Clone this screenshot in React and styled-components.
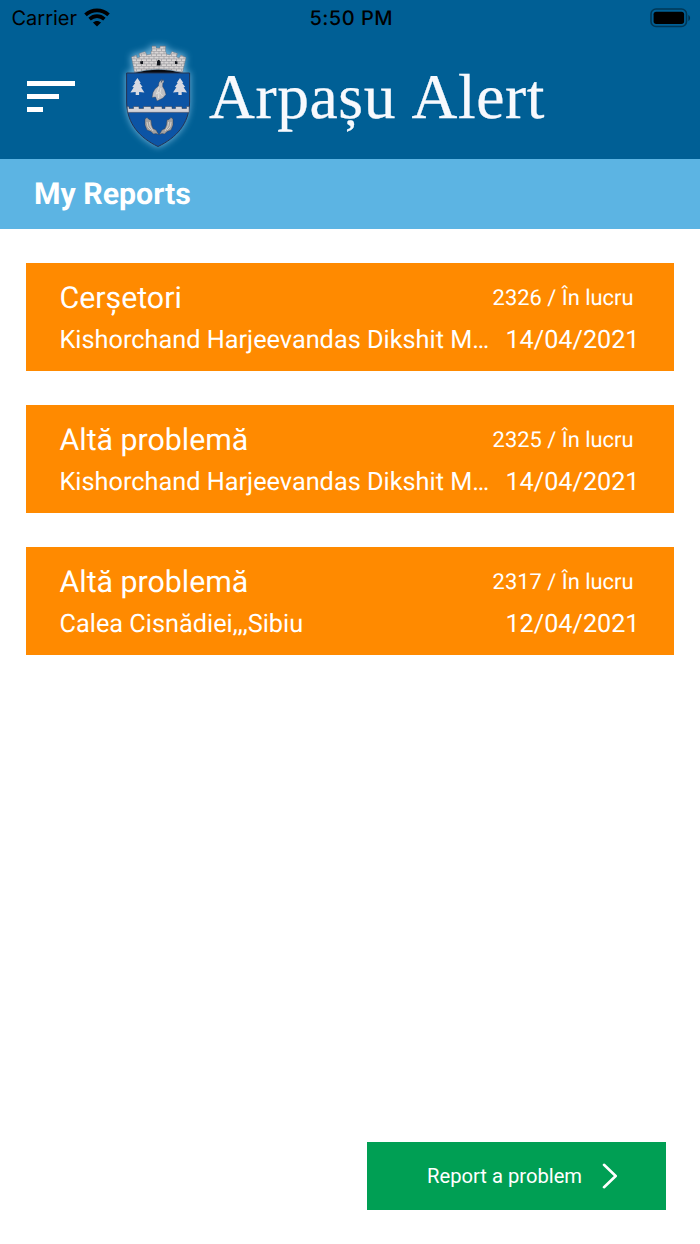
import styled, { createGlobalStyle } from "styled-components";

const GlobalStyle = createGlobalStyle`
  * {
    box-sizing: border-box;
  }
  body {
    margin: 0;
    background-color: #ffffff;
    font-family: Roboto, sans-serif;
    text-rendering: geometricPrecision;
  }
`;
const Screen = styled.div`
  width: 700px;
  height: 1244px;
  display: flex;
  flex-direction: column;
  overflow: hidden;
`;
const Header = styled.header`
  height: 159px;
  background-color: #005f95;
`;
const StatusBar = styled.div`
  height: 36px;
  padding: 0 9px 0 11.5px;
  display: grid;
  grid-template-columns: 1fr auto 1fr;
  align-items: center;
  color: #000000;
  font-family: Inter, sans-serif;
`;
const Carrier = styled.div`
  display: flex;
  align-items: center;
  gap: 7px;
  font-size: 20px;
`;
const Clock = styled.div`
  font-size: 20px;
  font-weight: 500;
  letter-spacing: 0.5px;
`;
const Battery = styled.svg`
  justify-self: end;
`;
const Brand = styled.div`
  height: 123px;
  padding-left: 27px;
  display: flex;
`;
const Menu = styled.div`
  width: 48px;
  margin: 44.5px 38px 0 0;
  display: flex;
  flex-direction: column;
  gap: 8px;
`;
const MenuLine = styled.div`
  width: ${(props) => props.$width}px;
  height: 5px;
  background-color: #ffffff;
`;
const Logo = styled.svg`
  flex: none;
  overflow: visible;
`;
const AppName = styled.div`
  margin: 25px 0 0 -4px;
  color: #f7f9fd;
  font-family: "Liberation Serif", serif;
  font-size: 63.5px;
  line-height: 72px;
  letter-spacing: 0.6px;
  word-spacing: 2.5px;
  white-space: nowrap;
  -webkit-text-stroke: 0.3px #f7f9fd;
`;
const PageTitle = styled.h1`
  height: 70px;
  margin: 0;
  padding: 1px 0 0 34px;
  background-color: #5cb4e3;
  color: #ffffff;
  font-size: 30.3px;
  font-weight: 700;
  line-height: 70px;
`;
const List = styled.div`
  flex: 1;
  padding: 33.5px 26px 0 25.5px;
  display: flex;
  flex-direction: column;
  gap: 34px;
`;
const Card = styled.div`
  height: 108px;
  padding: 15px 34.5px 0 34px;
  background-color: #ff8a00;
  color: #ffffff;
`;
const Row = styled.div`
  height: 42px;
  display: flex;
  justify-content: space-between;
  align-items: center;
  white-space: nowrap;
`;
const Title = styled.div`
  font-size: 30.3px;
`;
const Status = styled.div`
  margin-right: 6px;
  font-size: 21.9px;
`;
const Address = styled.div`
  font-size: 25.3px;
`;
const ReportDate = styled.div`
  font-size: 25.2px;
`;
const Footer = styled.footer`
  padding: 0 34px 34px 0;
  display: flex;
  justify-content: flex-end;
`;
const ReportButton = styled.button`
  width: 299px;
  height: 68px;
  padding: 0 48px 0 60px;
  display: flex;
  align-items: center;
  justify-content: space-between;
  border: 0;
  background-color: #009f54;
  color: #ffffff;
  font-family: Roboto, sans-serif;
  font-size: 20.2px;
  white-space: nowrap;
`;

const reports = [
  {
    id: 2326,
    title: "Cerșetori",
    address: "Kishorchand Harjeevandas Dikshit M…",
    date: "14/04/2021",
  },
  {
    id: 2325,
    title: "Altă problemă",
    address: "Kishorchand Harjeevandas Dikshit M…",
    date: "14/04/2021",
  },
  {
    id: 2317,
    title: "Altă problemă",
    address: "Calea Cisnădiei,,,Sibiu",
    date: "12/04/2021",
  },
];

const WifiIcon = () => (
  <svg width="26" height="20" viewBox="0 0 26 20" fill="none" stroke="#000">
    <path d="M1.5 6.9C8.2 .8 17.8 .8 24.5 6.9" strokeWidth="3.8" />
    <path d="M5.6 11.1C10 7.1 16 7.1 20.4 11.1" strokeWidth="3.6" />
    <path d="M8.9 14.6C11.4 12.4 14.6 12.4 17.1 14.6L13 18.6Z" fill="#000" stroke="none" />
  </svg>
);

const BatteryIcon = () => (
  <Battery width="42" height="20" viewBox="0 0 42 20">
    <rect x="2" y="1" width="35.5" height="17.5" rx="5" fill="none" stroke="#000" strokeOpacity=".42" strokeWidth="1.6" />
    <rect x="4.6" y="3.7" width="30.5" height="12.2" rx="2.6" />
    <path d="M39.4 7V13C41.6 12 41.6 8 39.4 7Z" opacity=".5" />
  </Battery>
);

const Tree = ({ x }) => (
  <path
    transform={`translate(${x} 42)`}
    d="M0 0L3.3 4.7L2.2 5L5.2 9L3.6 9.3L7 14.4L1.7 14V17H-1.7V14L-7 14.4L-3.6 9.3L-5.2 9L-2.2 5L-3.3 4.7Z"
    fill="#d7d9e2"
  />
);

const Fish = () => (
  <>
    <path
      d="M32 83L34 81.5L36 83.5L38 84L38.6 89L40 92.5L43 94L45.6 98.6L43 97.5L40.5 98L38 95.5L34 94L32 89Z"
      fill="#a3a1a0"
      stroke="#343b49"
      strokeWidth=".4"
    />
    <path d="M34 86L35 91L38 94M36.4 86L37 90L40 95" stroke="#dedbd6" strokeWidth=".8" fill="none" />
  </>
);

const Crest = () => (
  <Logo width="100" height="119" viewBox="0 0 100 119">
    <defs>
      <filter id="glow" x="-30%" y="-30%" width="160%" height="160%">
        <feGaussianBlur stdDeviation="3.6" />
      </filter>
      <pattern id="stones" width="5" height="5" patternUnits="userSpaceOnUse">
        <rect width="5" height="5" fill="#d9d6d6" />
        <path d="M0 .4H5M0 2.9H5M1 .4V2.9M3.5 2.9V5" stroke="#85858a" strokeWidth=".5" />
      </pattern>
    </defs>
    <path
      d="M19 20L38 15V11H53V15L72 20L70 37H76V66C75 88 63 102 45 110C27 102 15 88 14 66V37H21Z"
      fill="#a9dcfa"
      stroke="#a9dcfa"
      strokeWidth="2"
      opacity=".7"
      filter="url(#glow)"
    />
    <path d="M21 37Q45 30 70 37V39H21Z" fill="#080a10" />
    <path
      d="M18.5 21L23.5 19L24 22L27 21L26 17.5L32 15.5L34 19L38 18V15H39V10H43V12H47V10H52.5V15L53.5 18L57 19L59 15.5L64.5 17.5L63.5 21L66 22L68 19L73 21.5L69.5 36.5Q45 30 21.5 36.5Z"
      fill="url(#stones)"
      stroke="#686b73"
      strokeWidth=".4"
    />
    <path d="M44 29.5V25.5Q45.5 22 47.5 25.5V29.5ZM27 25.5L30 25V28H27.5ZM62 25L64.5 25.5V28H62Z" fill="#11141b" />
    <path
      d="M13.6 37H76.6V66C76.3 88 63 102 45 110.5C27 102 13.9 88 13.6 66Z"
      fill="#0c54a5"
      stroke="#253250"
      strokeWidth="1"
    />
    <Tree x={24.4} />
    <Tree x={67} />
    <path
      d="M48.8 43L46 46.5L45.4 50L42 53L40 56.5L39 61.5L42.5 61L44 65L50 62L53 58.5L51.6 54L49.6 50.5L49.8 47Q52 46 50 43.5L48.3 46.5L48.8 43Z"
      fill="#bfbfc2"
      stroke="#303a50"
      strokeWidth=".4"
    />
    <path d="M46 51L43.5 58L46 56L45.5 62M48 52L47 57L49.5 60" stroke="#e3e2df" strokeWidth=".9" fill="none" />
    <path
      d="M14.2 70.5H16V72.5H20.5V70.5H26V72.5H30.5V70.5H38V72.5H41V70.5H49V72.5H52V70.5H59V72.5H62.5V70.5H69V72.5H73.5V70.5H76.2V76.4H14.8Z"
      fill="#d3d3d9"
      stroke="#34435f"
      strokeWidth=".6"
    />
    <Fish />
    <g transform="translate(92 0) scale(-1 1)">
      <Fish />
    </g>
  </Logo>
);

const ArrowIcon = () => (
  <svg width="16" height="26" viewBox="0 0 16 26" fill="none" stroke="#fff">
    <path d="M2 1.8L13.7 13L2 24.2" strokeWidth="2.6" strokeLinecap="round" strokeLinejoin="round" />
  </svg>
);

export default function App() {
  return (
    <Screen>
      <GlobalStyle />
      <Header>
        <StatusBar>
          <Carrier>
            Carrier
            <WifiIcon />
          </Carrier>
          <Clock>5:50 PM</Clock>
          <BatteryIcon />
        </StatusBar>
        <Brand>
          <Menu>
            <MenuLine $width={47.5} />
            <MenuLine $width={32} />
            <MenuLine $width={16} />
          </Menu>
          <Crest />
          <AppName>Arpașu Alert</AppName>
        </Brand>
      </Header>
      <PageTitle>My Reports</PageTitle>
      <List>
        {reports.map((report) => (
          <Card key={report.id}>
            <Row>
              <Title>{report.title}</Title>
              <Status>{report.id} / În lucru</Status>
            </Row>
            <Row>
              <Address>{report.address}</Address>
              <ReportDate>{report.date}</ReportDate>
            </Row>
          </Card>
        ))}
      </List>
      <Footer>
        <ReportButton>
          Report a problem
          <ArrowIcon />
        </ReportButton>
      </Footer>
    </Screen>
  );
}
